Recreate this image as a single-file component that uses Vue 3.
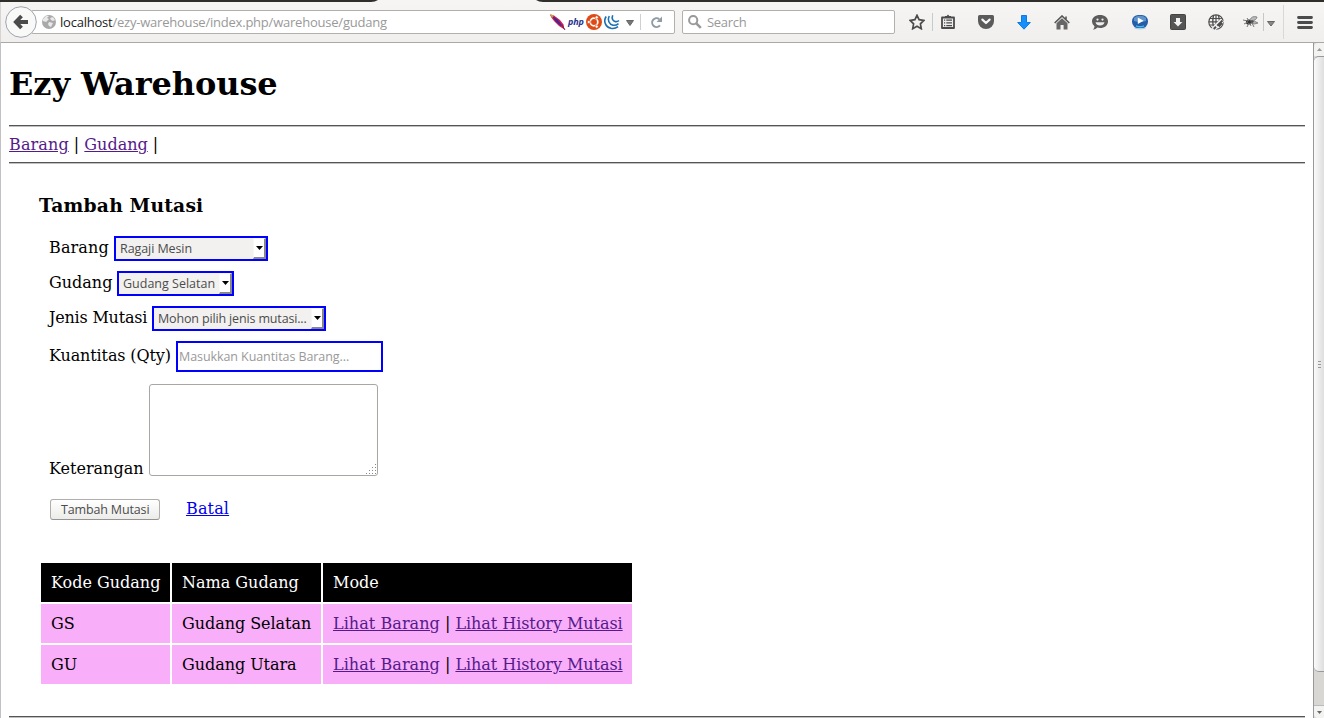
<script setup>
const selects = [
  { label: 'Barang', value: 'Ragaji Mesin', cls: 'sel-barang', lab: 'lab-barang' },
  { label: 'Gudang', value: 'Gudang Selatan', cls: 'sel-gudang', lab: 'lab-gudang' },
  { label: 'Jenis Mutasi', value: 'Mohon pilih jenis mutasi...', cls: 'sel-jenis', lab: 'lab-jenis' },
]
const rows = [
  { kode: 'GS', nama: 'Gudang Selatan' },
  { kode: 'GU', nama: 'Gudang Utara' },
]
const grip = [[9, 0], [6, 3], [9, 3], [3, 6], [6, 6], [9, 6], [0, 9], [3, 9], [6, 9], [9, 9]]
</script>

<template>
  <div class="window">
    <div class="tabstrip">
      <svg width="1324" height="3" viewBox="0 0 1324 3"><path d="M0 0H378Q375 2 371 2H0ZM536 0H1324V2H543Q539 2 536 0Z" fill="#302e2b" /></svg>
    </div>
    <header class="toolbar">
      <div class="back">
        <svg width="32" height="32" viewBox="0 0 32 32"><circle cx="16" cy="16" r="15.3" fill="#f9f9f8" stroke="#9da4ad" /><path d="M16.5 10L10.8 16L16.5 22M11.5 16H23" fill="none" stroke="#4b4b4b" stroke-width="3.8" /></svg>
      </div>
      <div class="urlbar">
        <svg class="globe" width="14" height="14" viewBox="0 0 14 14"><circle cx="7" cy="7" r="7" fill="#a9a9a9" /><path d="M1 4L4 1L7 1L5 3L7 4L4 7L1 6ZM8 3L11 2L13 5L11 6L9 5ZM7 7L11 8L9 12L7 11L6 9Z" fill="#e9e9e9" /></svg>
        <span class="url"><b>localhost</b>/ezy-warehouse/index.php/warehouse/gudang</span>
        <svg class="feather" width="16" height="16" viewBox="0 0 16 16"><path d="M0 0.5L4 1.5L10 6L13.5 10.5L14.5 15.5L9 12L4 7L1 3Z" fill="#cf1c57" /><path d="M2 2L7 5L12 11L11 12L6 8Z" fill="#432a91" /><path d="M0 0L4 1.5L2 4Z" fill="#c5a338" /><path d="M12 11L15 16" stroke="#6b2450" /></svg>
        <span class="php">php</span>
        <svg class="ubuntu" width="16" height="16" viewBox="0 0 16 16"><circle cx="8" cy="8" r="8" fill="#df4b17" /><circle cx="8" cy="8" r="3.8" fill="none" stroke="#fff" stroke-width="1.7" /><g fill="#fff" stroke="#df4b17" stroke-width=".7"><circle cx="2.8" cy="8" r="1.6" /><circle cx="10.7" cy="3.4" r="1.6" /><circle cx="10.7" cy="12.6" r="1.6" /></g></svg>
        <svg class="jq" width="16" height="16" viewBox="0 0 16 16"><g fill="none" stroke="#1b70b2" stroke-width="1.6"><path d="M2.2 2.5C-1 7 1.5 13.2 7 14.3Q11 15 14 12.6" /><path d="M5.2 2C3.2 6 5 10.2 9 11.2Q12 11.7 14.5 9.6" /><path d="M8.7 1.2C7.4 4.5 8.8 7.2 11.4 7.6Q13.4 7.9 15 6.5" /></g></svg>
        <svg class="drop" width="8" height="6" viewBox="0 0 8 6"><path d="M.5 .5H7.5L4 5.5Z" fill="#777" stroke="#666" /></svg>
        <i class="sep"></i>
        <svg class="reload" width="13" height="13" viewBox="0 0 13 13"><path d="M9.2 3.1A4.4 4.4 0 1 0 10 9.4" fill="none" stroke="#8f9ba5" stroke-width="2" /><path d="M12 .5V6H6.5Z" fill="#8f9ba5" /></svg>
      </div>
      <div class="search">
        <svg width="14" height="14" viewBox="0 0 14 14"><circle cx="5.2" cy="5.2" r="4.1" fill="none" stroke="#999" stroke-width="2" /><path d="M8.3 8.3L12.8 12.8" stroke="#999" stroke-width="2.6" /></svg>
        <span>Search</span>
      </div>
      <div class="tools">
        <svg width="16" height="16" viewBox="0 0 16 16"><path d="M8 1.3L10.1 5.7L14.8 6.4L11.4 9.8L12.3 14.7L8 12.2L3.7 14.7L4.6 9.8L1.2 6.4L5.9 5.7Z" fill="none" stroke="#4b4b4b" stroke-width="1.7" /></svg>
        <i class="tsep"></i>
        <svg width="14" height="16" viewBox="0 0 14 16"><path d="M1 3.5H13V14H1Z" fill="#eee" stroke="#4b4b4b" stroke-width="1.8" stroke-linejoin="round" /><path d="M4 4V2H5.7L7 .5L8.3 2H10V4Z" fill="#4b4b4b" /><path d="M3 6.2H4.2M5.3 6.2H11M3 8.9H4.2M5.3 8.9H11M3 11.6H4.2M5.3 11.6H11" stroke="#4b4b4b" stroke-width="1.2" /></svg>
        <svg class="g23" width="16" height="14" viewBox="0 0 16 14"><path d="M1.5 0H14.5Q16 0 16 1.5V6A8 8 0 0 1 0 6V1.5Q0 0 1.5 0Z" fill="#5b5b5b" /><path d="M4.4 4.6L8 8L11.6 4.6" fill="none" stroke="#f7f7f7" stroke-width="2.2" stroke-linecap="round" stroke-linejoin="round" /></svg>
        <svg class="g23" width="14" height="15" viewBox="0 0 14 15"><path d="M4.5 .5H9.5V7.5H13.3L7 14.2L.7 7.5H4.5Z" fill="#1590fb" stroke="#1078e4" /></svg>
        <svg class="g23" width="16" height="15" viewBox="0 0 16 15"><path d="M.7 8L8 1L15.3 8" fill="none" stroke="#555" stroke-width="1.6" /><path d="M2.5 8.2L8 3.2L13.5 8.2V14.5H9.6V10H6.5V14.5H2.5Z" fill="#666" /><path d="M12 1.5V4.5" stroke="#555" stroke-width="1.6" /></svg>
        <svg class="g22" width="16" height="15" viewBox="0 0 16 15"><path d="M8 0C12.6 0 16 2.7 16 6.4S12.6 13 8 13Q6.6 13 5.5 12.6Q3.8 14.5 1 14.8Q2.5 13 2.5 11.2Q0 9.4 0 6.4C0 2.7 3.4 0 8 0Z" fill="#5c5c5c" /><circle cx="5.5" cy="4.6" r="1.1" fill="#eee" /><circle cx="10.5" cy="4.6" r="1.1" fill="#eee" /><path d="M3.5 7.3H12.5Q11.5 10.5 8 10.5T3.5 7.3Z" fill="#eee" /></svg>
        <svg class="g24" width="16" height="16" viewBox="0 0 16 16"><ellipse cx="8" cy="14" rx="6" ry="1.5" fill="#b6cfdf" /><rect x="0" y="1" width="16" height="13" rx="6.3" fill="#245da8" /><path d="M2 4Q4 1.8 8 1.8T14 4V7Q8 9 2 7Z" fill="#6093ca" /><path d="M4 11.8Q8 13.6 12 11.8" fill="none" stroke="#43b8ea" stroke-width="1.4" /><path d="M5.8 3.5L11.6 6.8L5.8 10Z" fill="#fff" /></svg>
        <svg class="g22" width="16" height="16" viewBox="0 0 16 16"><rect x=".5" y=".5" width="15" height="15" rx="1" fill="#555" stroke="#444" /><path d="M6 4H10V8H12.4L8 12.6L3.6 8H6Z" fill="#f3f3f3" /></svg>
        <svg class="g22" width="16" height="16" viewBox="0 0 16 16"><g fill="none" stroke="#4d4d4d" stroke-width="1.2"><circle cx="8" cy="8" r="7.2" /><path d="M2 4.5H14M1 7.8H15M1.5 11H12M5.5 1.5Q3.8 8 5.8 14.5M10.5 1.5Q12.2 8 10.2 12M8 1V14" /></g><path d="M5 15.5L14.5 6" stroke="#f2f1f0" stroke-width="4.5" /><path d="M5.7 15L8 12.8M9.2 11.6L14.5 6.5M10.7 12.5L14 9" stroke="#4d4d4d" stroke-width="1.9" /></svg>
        <svg class="g20" width="16" height="14" viewBox="0 0 16 14"><path d="M6 6Q9 0 14 2Q14 5 7 7ZM7 7Q12 5 15 8Q12 10 7 8Z" fill="#b8b8b8" stroke="#777" stroke-width=".8" /><circle cx="5.5" cy="7" r="2.6" fill="#333" /><circle cx="9" cy="6.5" r="1.6" fill="#555" /><path d="M0 5L5 6M1 9L5 7M4 3L6 6M4 12L6 8M8 11L7 8M11 12L9 8" stroke="#777" /></svg>
        <i class="tsep2"></i>
        <svg class="drop2" width="8" height="6" viewBox="0 0 8 6"><path d="M.5 .5H7.5L4 5Z" fill="#888" stroke="#666" /></svg>
        <i class="tsep3"></i>
        <svg class="burger" width="16" height="13" viewBox="0 0 16 13"><path d="M1.5 1.5H14.5M1.5 6.5H14.5M1.5 11.5H14.5" stroke="#4b4b4b" stroke-width="2.8" stroke-linecap="round" /></svg>
      </div>
    </header>

    <div class="viewport">
      <main class="page">
        <h1>Ezy Warehouse</h1>
        <hr />
        <nav><a class="visited">Barang</a> | <a class="visited">Gudang</a> |</nav>
        <hr />
        <section class="content">
          <h3>Tambah Mutasi</h3>
          <div class="form">
            <div v-for="s in selects" :key="s.label" class="field">
              <label :class="s.lab">{{ s.label }}</label>
              <div class="select" :class="s.cls"><span>{{ s.value }}</span><i class="arrow"><svg width="7" height="4" viewBox="0 0 7 4"><path d="M0 0H7L3.5 4Z" fill="#000" /></svg></i></div>
            </div>
            <div class="field qty">
              <label>Kuantitas (Qty)</label>
              <div class="input"><span>Masukkan Kuantitas Barang...</span></div>
            </div>
            <div class="field note">
              <label>Keterangan</label>
              <div class="textarea"><svg width="10" height="10" viewBox="0 0 10 10"><rect v-for="(p, i) in grip" :key="i" :x="p[0]" :y="p[1]" width="1" height="1" fill="#888" /></svg></div>
            </div>
            <div class="actions"><div class="button"><span>Tambah Mutasi</span></div><a class="link">Batal</a></div>
          </div>
          <table>
            <thead><tr><th>Kode Gudang</th><th>Nama Gudang</th><th>Mode</th></tr></thead>
            <tbody>
              <tr v-for="r in rows" :key="r.kode"><td>{{ r.kode }}</td><td>{{ r.nama }}</td><td><a class="visited">Lihat Barang</a> | <a class="visited">Lihat History Mutasi</a></td></tr>
            </tbody>
          </table>
        </section>
        <hr />
      </main>
      <aside class="scrollbar">
        <div class="sbtn"><svg width="5" height="3" viewBox="0 0 5 3"><path d="M0 3L2.5 0L5 3Z" fill="#999" /></svg></div>
        <div class="thumb"><i></i><i></i><i></i></div>
        <div class="track"></div>
        <div class="sbtn end"><svg width="5" height="3" viewBox="0 0 5 3"><path d="M0 0H5L2.5 3Z" fill="#666" /></svg></div>
      </aside>
    </div>
  </div>
</template>

<style>
html, body { margin: 0; background: #fff; overflow: hidden; }
</style>

<style scoped>
* { box-sizing: border-box; }
svg { display: block; flex: none; }
.window { width: 1324px; height: 718px; overflow: hidden; display: flex; flex-direction: column; background: #fff; color: #000; font: 16px/19px "DejaVu Serif", serif; }
.tabstrip { height: 2px; background: #f6f5f4; flex: none; }
.toolbar { height: 41px; flex: none; display: flex; align-items: flex-start; border-bottom: 1px solid #aaa8a6; background: linear-gradient(#f6f5f4, #f0efed); border-left: 1px solid #d5d4d2; font-family: "Open Sans", "Noto Sans", sans-serif; }
.back { width: 32px; height: 32px; margin: 4px 0 0 4px; position: relative; z-index: 1; }
.urlbar { width: 644px; height: 24px; margin: 8px 0 0 -6px; padding-left: 10px; border: 1px solid #b2b0ad; border-radius: 2px; background: #fff; display: flex; align-items: center; }
.url { margin-left: 4px; width: 330px; flex: none; white-space: nowrap; font-size: 13px; letter-spacing: -0.22px; color: #999; }
.url b { font-weight: 400; color: #222; }
.feather { margin-left: 160px; }
.php { width: 16px; flex: none; margin-left: 2px; font: italic bold 9px/14px "Open Sans", sans-serif; letter-spacing: -0.2px; color: #27338d; }
.ubuntu { margin-left: 2px; }
.jq { margin-left: 2px; }
.drop { margin: 2px 0 0 6px; }
.sep { width: 1px; height: 16px; margin-left: 6px; background: #d0d0d0; }
.reload { margin-left: 9px; }
.search { width: 213px; height: 24px; margin: 8px 0 0 7px; border: 1px solid #b2b0ad; border-radius: 2px; background: #fff; display: flex; align-items: center; padding-left: 5px; color: #999; font-size: 13px; }
.search span { margin-left: 5px; letter-spacing: -0.3px; }
.tools { height: 40px; margin-left: 14px; display: flex; align-items: center; }
.tsep { width: 1px; height: 18px; margin: 0 8px 0 7px; background: #c3cad0; }
.g23 { margin-left: 23px; }
.g24 { margin-left: 24px; }
.g22 { margin-left: 22px; }
.g20 { margin-left: 19px; }
.tsep2 { width: 1px; height: 18px; margin-left: 4px; background: #c8c7c5; }
.drop2 { margin: 3px 0 0 3px; }
.tsep3 { width: 1px; height: 34px; margin-left: 8px; background: #d9d8d6; }
.burger { margin-left: 13px; }
.viewport { height: 675px; display: flex; border-left: 1px solid #c2bfc7; }
.page { width: 1312px; padding: 0 8px; }
h1 { font: bold 32px/37px "DejaVu Serif", serif; letter-spacing: -0.08px; margin: 0; padding: 23px 0 0; height: 82px; white-space: nowrap; }
hr { margin: 0; border: 0; height: 2px; background: linear-gradient(#555 50%, #c0c0c0 50%); }
nav { height: 35px; padding-top: 8px; white-space: nowrap; }
nav a:first-child { letter-spacing: 0.12px; }
a { text-decoration: underline; }
.visited { color: #551a8b; }
.link { color: #00e; letter-spacing: 0.15px; }
.content { height: 552px; padding-left: 30px; }
h3 { margin: 0; padding-top: 30px; font: bold 18.72px/22px "DejaVu Serif", serif; letter-spacing: 0.18px; height: 72px; white-space: nowrap; }
.form { padding-left: 10px; height: 325px; }
.field { display: flex; height: 35px; align-items: flex-start; }
label { flex: none; white-space: nowrap; padding-top: 2px; }
.lab-barang { width: 65px; letter-spacing: 0.12px; }
.lab-gudang { width: 68px; }
.lab-jenis { width: 103px; letter-spacing: -0.2px; }
.select { height: 25px; border: 2px solid #00f; background: #f2f1f0; display: flex; align-items: center; font: 12.5px/17px "Open Sans", sans-serif; color: #4c4c4c; padding-left: 4px; }
.select span, .input span, .button span { white-space: nowrap; }
.arrow { width: 13px; height: 21px; margin-left: auto; border: 1px solid #f7f7f7; border-right: 2px solid #888; border-bottom: 2px solid #888; background: #fff; display: flex; align-items: center; justify-content: center; }
.sel-barang { width: 154px; letter-spacing: -0.08px; }
.sel-gudang { width: 117px; }
.sel-jenis { width: 174px; letter-spacing: -0.15px; }
.input { width: 207px; height: 31px; border: 2px solid #00f; background: #fff; padding-left: 1px; display: flex; align-items: center; font: 12.5px/17px "Open Sans", sans-serif; letter-spacing: -0.08px; color: #999; }
.qty { height: 43px; }
.qty label { width: 127px; padding-top: 5px; letter-spacing: -0.12px; }
.note { height: 92px; }
.note label { width: 100px; padding-top: 75px; }
.textarea { width: 229px; height: 92px; border: 1px solid #aaa6a2; border-radius: 3px; display: flex; align-items: flex-end; justify-content: flex-end; padding: 1px; }
.actions { display: flex; padding: 23px 0 0 1px; }
.button { width: 110px; height: 21px; border: 1px solid #b0aeab; border-bottom-color: #969390; border-radius: 3px; background: linear-gradient(#fff, #ececea); font: 12.5px/19px "Open Sans", sans-serif; letter-spacing: -0.15px; color: #4c4c4c; padding-left: 10px; }
.actions a { margin-left: 26px; }
table { border-spacing: 2px; border-collapse: separate; width: 595px; table-layout: fixed; }
th, td { height: 39px; padding: 0 10px; text-align: left; font-weight: 400; white-space: nowrap; }
th:nth-child(1) { width: 129px; }
th:nth-child(2) { width: 149px; }
th { background: #000; color: #fff; }
td { background: #f9aef9; }
td:nth-child(2) { letter-spacing: -0.05px; }
td a:first-child { letter-spacing: 0.06px; }
td a:last-child { letter-spacing: -0.05px; }
.scrollbar { width: 11px; background: #d9d7d4; border-left: 1px solid #999; display: flex; flex-direction: column; }
.sbtn { height: 13px; display: flex; align-items: center; justify-content: center; background: #f3f3f2; border-radius: 4px 0 0 0; }
.thumb { height: 616px; border: 1px solid #999; border-width: 1px 0; border-radius: 5px 0 0 5px; background: linear-gradient(90deg, #fafafa, #dedede); display: flex; flex-direction: column; gap: 2px; align-items: center; justify-content: center; }
.thumb i { width: 3px; height: 1px; background: #999; }
.track { height: 33px; }
.end { border-radius: 0 0 0 4px; border-top: 1px solid #bbb; }
</style>
